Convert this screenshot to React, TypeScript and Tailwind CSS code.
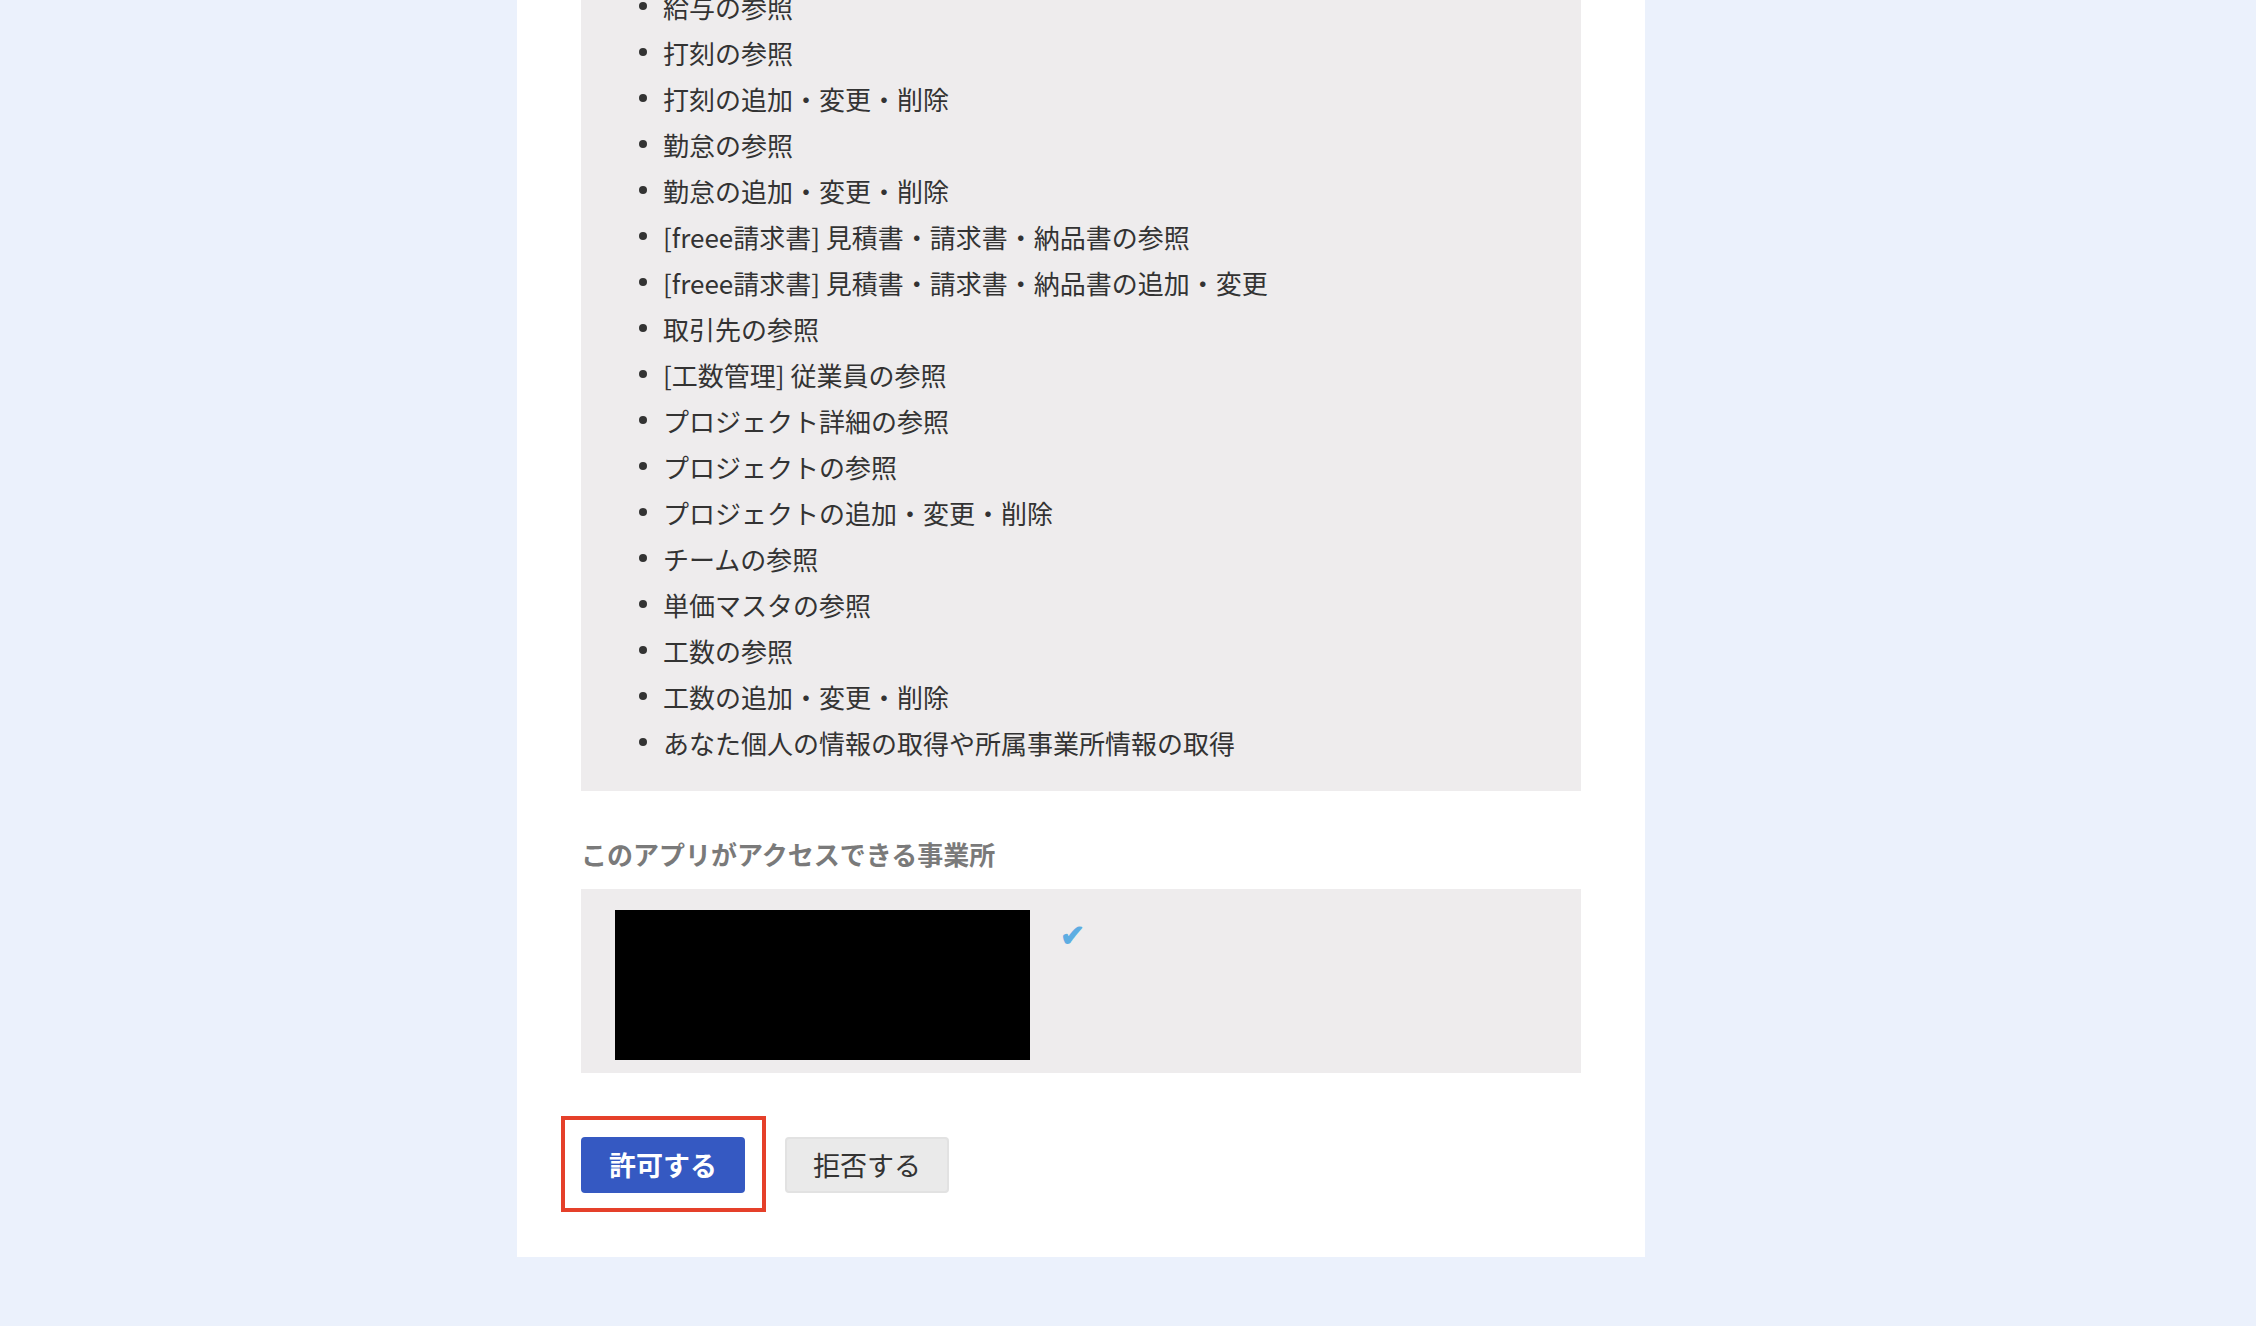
import React from "react";

/* 許可画面（下部までスクロールした状態） */

const scopes = [
  "給与の参照",
  "打刻の参照",
  "打刻の追加・変更・削除",
  "勤怠の参照",
  "勤怠の追加・変更・削除",
  "[freee請求書] 見積書・請求書・納品書の参照",
  "[freee請求書] 見積書・請求書・納品書の追加・変更",
  "取引先の参照",
  "[工数管理] 従業員の参照",
  "プロジェクト詳細の参照",
  "プロジェクトの参照",
  "プロジェクトの追加・変更・削除",
  "チームの参照",
  "単価マスタの参照",
  "工数の参照",
  "工数の追加・変更・削除",
  "あなた個人の情報の取得や所属事業所情報の取得",
];

const fontStack = {
  fontFamily: '"Noto Sans CJK JP", "Noto Sans", sans-serif',
};

export default function App() {
  return (
    <div
      className="h-[1326px] w-full overflow-hidden bg-[#ebf1fc] text-[#333333]"
      style={fontStack}
    >
      <div className="-mt-[37px] ml-[517px] w-[1128px] bg-white px-[64px] pb-[64px]">
        {/* 権限一覧 */}
        <div className="bg-[#eeeced] pb-[26px] pl-[58px] pt-[20px]">
          <ul>
            {scopes.map((scope) => (
              <li
                key={scope}
                className="flex h-[46px] items-center gap-[16px] text-[26px]"
              >
                <span className="h-[8px] w-[8px] shrink-0 rounded-full bg-[#333333]" />
                <span className="whitespace-nowrap">{scope}</span>
              </li>
            ))}
          </ul>
        </div>

        {/* 事業所 */}
        <h2 className="mt-[45px] text-[26px] font-bold leading-[36px] text-[#7a7a7a]">
          このアプリがアクセスできる事業所
        </h2>

        <div className="mt-[17px] flex h-[184px] items-start bg-[#eeeced] pl-[34px] pt-[21px]">
          <div className="h-[150px] w-[415px] bg-black" />
          <span className="ml-[30px] mt-[8px] text-[30px] font-bold leading-[30px] text-[#5dade2]">
            ✔
          </span>
        </div>

        {/* ボタン */}
        <div className="mt-[64px] flex items-center gap-[40px]">
          <div className="relative">
            <span className="absolute -bottom-[19px] -left-[20px] -right-[21px] -top-[21px] border-4 border-[#e5402a]" />
            <button
              type="button"
              className="flex h-[56px] w-[164px] items-center justify-center rounded-[4px] bg-[#3559c2] text-[27px] font-bold text-white"
            >
              許可する
            </button>
          </div>
          <button
            type="button"
            className="flex h-[56px] w-[164px] items-center justify-center rounded-[4px] border-2 border-[#e2e2e2] bg-[#eaeaea] text-[27px] text-[#333333]"
          >
            拒否する
          </button>
        </div>
      </div>
    </div>
  );
}
